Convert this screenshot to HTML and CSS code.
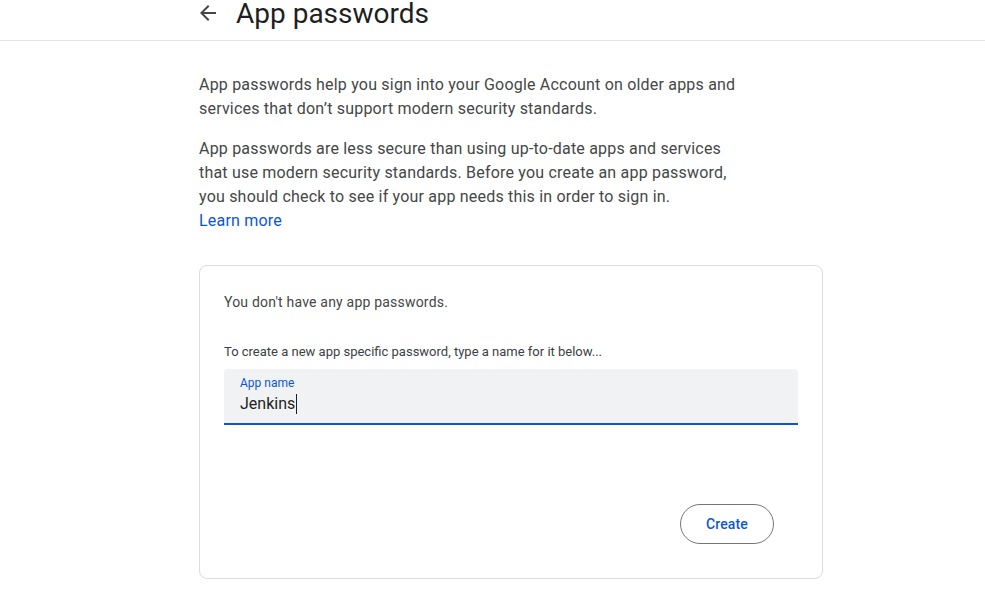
FILE: index.html
```html
<!DOCTYPE html>
<html>
<head>
<meta charset="utf-8">
<link rel="stylesheet" href="styles.css">
</head>
<body>
<header class="topbar">
  <span class="back" aria-label="Back">
    <svg width="24" height="24" viewBox="0 0 24 24"><path d="M20 11H7.83l5.59-5.59L12 4l-8 8 8 8 1.41-1.41L7.83 13H20v-2z" fill="#444746"/></svg>
  </span>
  <h1 class="title">App passwords</h1>
</header>
<main class="content">
  <p class="para">App passwords help you sign into your Google Account on older apps and services that don’t support modern security standards.</p>
  <p class="para">App passwords are less secure than using up-to-date apps and services that use modern security standards. Before you create an app password, you should check to see if your app needs this in order to sign in.<br><a class="link" href="#">Learn more</a></p>
  <section class="card">
    <p class="empty">You don't have any app passwords.</p>
    <p class="hint">To create a new app specific password, type a name for it below...</p>
    <div class="field">
      <span class="field-label">App name</span>
      <span class="field-value">Jenkins<span class="caret"></span></span>
    </div>
    <div class="actions">
      <button class="btn">Create</button>
    </div>
  </section>
</main>
</body>
</html>
```
FILE: styles.css
```css
* { box-sizing: border-box; }
html, body { margin: 0; padding: 0; background: #fff; }
body { font-family: Roboto, "Noto Sans", Arial, sans-serif; color: #444746; overflow: hidden; }
.topbar { height: 41px; border-bottom: 1px solid #e3e3e3; display: flex; align-items: flex-start; padding-left: 196px; }
.back { display: flex; width: 24px; height: 24px; margin-right: 16px; margin-top: 1px; }
.title { margin: -4px 0 0; font-weight: 400; font-size: 28px; line-height: 36px; color: #1f1f1f; white-space: nowrap; }
.content { padding-left: 199px; padding-top: 32px; }
.para { margin: 0 0 16px; width: 550px; font-size: 16px; line-height: 24px; letter-spacing: 0.2px; color: #444746; }
.link { color: #0b57d0; text-decoration: none; }
.card { margin-top: 32px; width: 624px; height: 314px; border: 1px solid #dadce0; border-radius: 8px; padding: 26px 24px 0 24px; display: flex; flex-direction: column; }
.empty { margin: 0; font-size: 14px; line-height: 20px; letter-spacing: 0.2px; color: #444746; }
.hint { margin: 32px 0 9px; font-size: 13px; line-height: 16px; color: #3c4043; }
.field { height: 56px; background: #f0f2f4; border-bottom: 2px solid #0b57d0; border-radius: 4px 4px 0 0; padding: 7px 16px 0; display: flex; flex-direction: column; }
.field-label { font-size: 12px; line-height: 14px; color: #0b57d0; }
.field-value { font-size: 16px; line-height: 24px; margin-top: 2px; color: #1f1f1f; display: flex; align-items: center; }
.caret { display: inline-block; width: 1px; height: 20px; background: #1f1f1f; margin-left: 1px; }
.actions { display: flex; justify-content: flex-end; padding-right: 24px; margin-top: 79px; }
.btn { height: 40px; width: 94px; border: 1px solid #747775; border-radius: 20px; background: #fff; color: #0b57d0; font-family: Roboto, Arial, sans-serif; font-size: 14px; font-weight: 500; letter-spacing: 0.1px; }
```
